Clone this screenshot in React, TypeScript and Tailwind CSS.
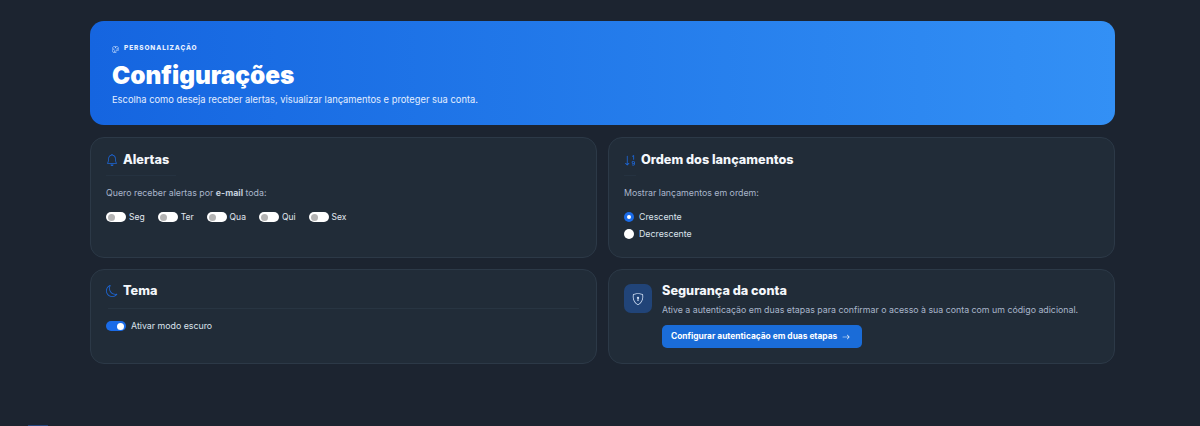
import React from "react";
import { BsBell, BsSortNumericDown, BsMoon, BsShieldLock, BsArrowRight, BsPalette } from "react-icons/bs";

const font = "font-['Inter','Liberation_Sans',sans-serif]";

function Toggle({ label }: { label: string }) {
  return (
    <div className="flex items-center gap-[3px]">
      <div className="flex h-[10px] w-[20px] items-center rounded-full bg-white pl-[2px]">
        <div className="h-[7px] w-[7px] rounded-full bg-[#b4b4b4]" />
      </div>
      <span className="text-[8.5px] leading-[12px] text-[#e2e8f0]">{label}</span>
    </div>
  );
}

function Radio({ label, on }: { label: string; on?: boolean }) {
  return (
    <div className="flex h-[17px] items-center gap-[5px]">
      {on ? (
        <div className="flex h-[10px] w-[10px] items-center justify-center rounded-full bg-[#1a6be8]">
          <div className="h-[4px] w-[4px] rounded-full bg-white" />
        </div>
      ) : (
        <div className="h-[10px] w-[10px] rounded-full bg-white" />
      )}
      <span className="text-[8.8px] leading-[12px] text-[#dbe3ec]">{label}</span>
    </div>
  );
}

const card = "rounded-[14px] border border-[#2c3947] bg-[#212c38]";
const title = "text-[12.7px] font-extrabold leading-[16px] text-[#f4f7fb]";

export default function App() {
  return (
    <div className={`${font} relative h-[426px] w-[1200px] overflow-hidden bg-[#1c2430] pl-[90px] pr-[85px] pt-[21px]`}>
      <header className="flex h-[104px] flex-col rounded-[14px] bg-gradient-to-r from-[#1565e0] to-[#3390f5] pl-[22px] pt-[23px]">
        <div className="flex h-[10px] items-center gap-[5px]">
          <BsPalette size={7} className="text-[#dbeafe]" />
          <span className="text-[6.5px] font-extrabold uppercase tracking-[0.14em] text-[#e6f0ff]">Personalização</span>
        </div>
        <h1 className="mt-[6px] text-[24.4px] font-black leading-[30px] text-white">Configurações</h1>
        <p className="mt-[3px] text-[9.35px] leading-[13px] text-[#e3eeff]">
          Escolha como deseja receber alertas, visualizar lançamentos e proteger sua conta.
        </p>
      </header>

      <div className="mt-[12px] grid grid-cols-2 gap-x-[11px] gap-y-[11px]">
        <section className={`${card} h-[121px] px-[15px] pt-[14px]`}>
          <div className="flex items-center gap-[5px]">
            <BsBell size={12} className="text-[#1d67d8]" />
            <h2 className={title}>Alertas</h2>
          </div>
          <div className="mt-[7px] h-px w-[70px] bg-[#253240]" />
          <p className="mt-[11px] text-[8.8px] leading-[12px] text-[#a9b6cb]">
            Quero receber alertas por <b className="font-bold text-[#c5cfdc]">e-mail</b> toda:
          </p>
          <div className="mt-[12px] flex gap-[13px]">
            {["Seg", "Ter", "Qua", "Qui", "Sex"].map((d) => (
              <Toggle key={d} label={d} />
            ))}
          </div>
        </section>

        <section className={`${card} h-[121px] px-[15px] pt-[14px]`}>
          <div className="flex items-center gap-[4px]">
            <BsSortNumericDown size={13} className="text-[#1d67d8]" />
            <h2 className={title}>Ordem dos lançamentos</h2>
          </div>
          <div className="mt-[7px] h-px w-[12px] bg-[#253240]" />
          <p className="mt-[11px] text-[8.8px] leading-[12px] text-[#a9b6cb]">Mostrar lançamentos em ordem:</p>
          <div className="mt-[9px] flex flex-col">
            <Radio label="Crescente" on />
            <Radio label="Decrescente" />
          </div>
        </section>

        <section className={`${card} h-[95px] px-[15px] pt-[13px]`}>
          <div className="flex items-center gap-[5px]">
            <BsMoon size={12} className="text-[#1d67d8]" />
            <h2 className={title}>Tema</h2>
          </div>
          <div className="mx-[2px] mt-[9px] h-px bg-[#283542]" />
          <div className="mt-[11px] flex items-center gap-[5px]">
            <div className="flex h-[10px] w-[20px] items-center justify-end rounded-full bg-[#1a6be8] pr-[2px]">
              <div className="h-[7px] w-[7px] rounded-full bg-white" />
            </div>
            <span className="text-[8.8px] leading-[12px] text-[#dbe3ec]">Ativar modo escuro</span>
          </div>
        </section>

        <section className={`${card} flex h-[95px] gap-[10px] px-[15px] pt-[14px]`}>
          <div className="flex h-[29px] w-[28px] items-center justify-center rounded-[7px] bg-[#214478]">
            <BsShieldLock size={12} className="text-[#d5e3f7]" />
          </div>
          <div className="-mt-px flex flex-col items-start">
            <h2 className={title}>Segurança da conta</h2>
            <p className="mt-[5px] text-[8.8px] leading-[12px] text-[#a9b6cb]">
              Ative a autenticação em duas etapas para confirmar o acesso à sua conta com um código adicional.
            </p>
            <button className="mt-[9px] flex h-[23px] w-[200px] items-center gap-[5px] rounded-[5px] bg-[#1a6cd8] pl-[9px] text-[8.4px] font-bold text-white">
              Configurar autenticação em duas etapas
              <BsArrowRight size={8} />
            </button>
          </div>
        </section>
      </div>

      <div className="absolute bottom-0 left-[28px] h-[1px] w-[20px] bg-[#24467c]" />
    </div>
  );
}
